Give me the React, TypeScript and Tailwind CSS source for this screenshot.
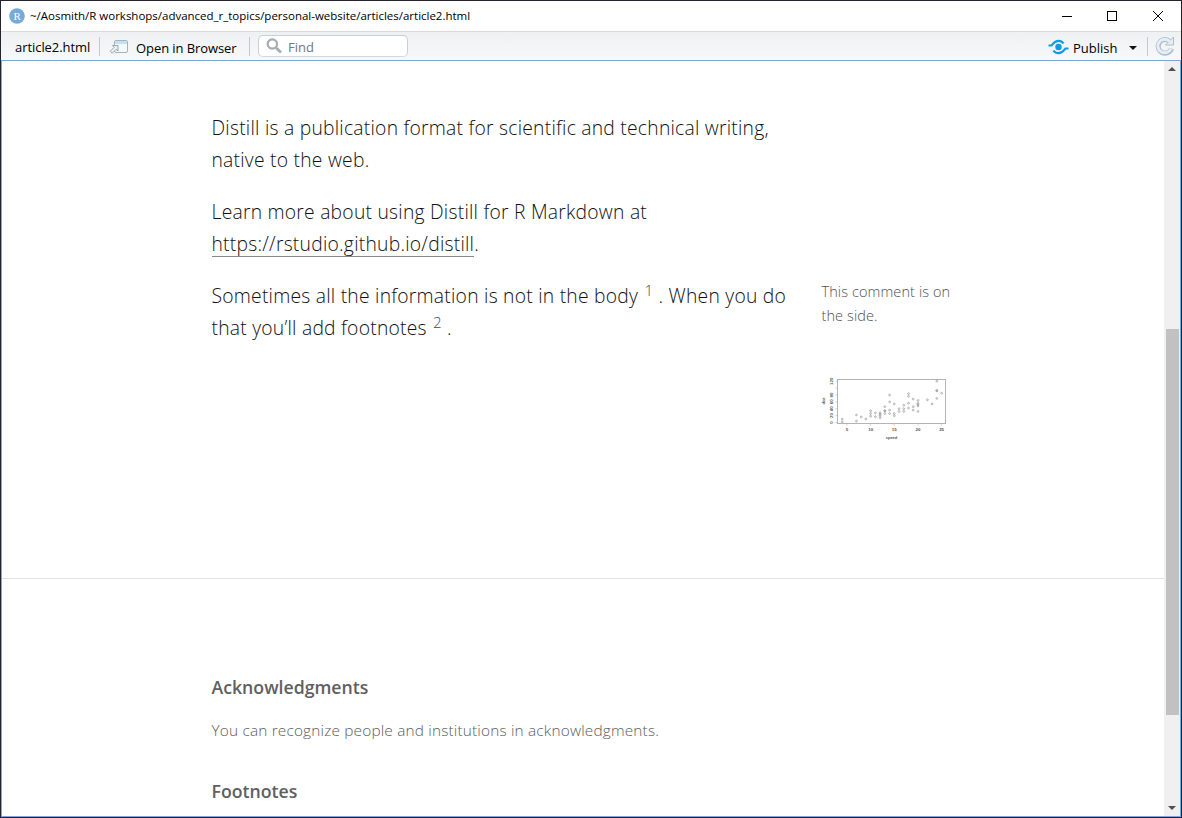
import React from "react";

const cars: [number, number][] = [
  [4, 2], [4, 10], [7, 4], [7, 22], [8, 16], [9, 10], [10, 18], [10, 26], [10, 34], [11, 17],
  [11, 28], [12, 14], [12, 20], [12, 24], [12, 28], [13, 26], [13, 34], [13, 34], [13, 46], [14, 26],
  [14, 36], [14, 60], [14, 80], [15, 20], [15, 26], [15, 54], [16, 32], [16, 40], [17, 32], [17, 40],
  [17, 50], [18, 42], [18, 56], [18, 76], [18, 84], [19, 36], [19, 46], [19, 68], [20, 32], [20, 48],
  [20, 52], [20, 56], [20, 64], [22, 66], [23, 54], [24, 70], [24, 92], [24, 93], [24, 120], [25, 85],
];

const px = (speed: number) => 32 + (speed - 5) * 4.73;
const py = (dist: number) => 52.5 - dist * 0.344;

function CarsPlot() {
  return (
    <svg width="140" height="75" viewBox="0 0 140 75" className="-ml-[7px] block">
      <rect x="22.5" y="9.5" width="108" height="44" fill="none" stroke="#b4b4b4" />
      {cars.map(([s, d], i) => (
        <circle key={i} cx={px(s)} cy={py(d)} r="0.9" fill="none" stroke="#888" strokeWidth="0.6" />
      ))}
      <g fill="#555" fontFamily="Liberation Sans, sans-serif" fontSize="4.4" fontWeight="bold" textAnchor="middle">
        {[5, 10, 15, 20, 25].map((v) => (
          <g key={v}>
            <path d={`M${px(v)} 53.5v2`} stroke="#aaa" strokeWidth="0.5" />
            <text x={px(v)} y="61">{v}</text>
          </g>
        ))}
        {[0, 20, 40, 60, 80, 100, 120].map((v) => (
          <g key={v}>
            <path d={`M20.5 ${py(v)}h2`} stroke="#aaa" strokeWidth="0.5" />
            {v !== 100 && (
              <text transform={`translate(18 ${py(v)}) rotate(-90)`}>{v}</text>
            )}
          </g>
        ))}
        <text x="76.500" y="69" fontSize="4">speed</text>
        <text transform="translate(10 31) rotate(-90)" fontSize="4">dist</text>
      </g>
    </svg>
  );
}

function TitleBar() {
  return (
    <div className="flex h-[31px] shrink-0 items-center border-b border-[#d9dadb] bg-white pl-2 text-black">
      <svg width="16" height="16" viewBox="0 0 16 16">
        <circle cx="8" cy="8" r="7.8" fill="#75aadb" />
        <text x="8.200" y="11.800" textAnchor="middle" fontFamily="Liberation Serif, serif" fontSize="11" fill="#fff">R</text>
      </svg>
      <span className="ml-[5px] whitespace-nowrap text-[11.5px] tracking-[-0.01px]">
        ~/Aosmith/R workshops/advanced_r_topics/personal-website/articles/article2.html
      </span>
      <svg className="ml-auto mr-[17px]" width="102" height="12" viewBox="0 0 102 12" fill="none" stroke="#000">
        <path d="M0 6.500h10" />
        <rect x="45.500" y="1.500" width="9" height="9" />
        <path d="M91 1l10 10M101 1L91 11" />
      </svg>
    </div>
  );
}

const Divider = () => <div className="h-[19px] w-px bg-[#c5c9cb]" />;

function Toolbar() {
  return (
    <div className="flex h-7 shrink-0 items-center bg-linear-to-b from-[#eef1f2] to-[#f7f8f9] text-[13px] text-black">
      <span className="ml-[14px] w-[75px] whitespace-nowrap pt-[3px] tracking-[-0.06px]">article2.html</span>
      <div className="ml-[9px]"><Divider /></div>
      <svg className="ml-[9px] mt-px" width="20" height="16" viewBox="0 0 20 16">
        <rect x="5.500" y="1.500" width="13" height="12" rx="1.500" fill="#f4f8fa" stroke="#a3b3be" />
        <path d="M6 2h12v3H6z" fill="#c4e0f4" />
        <path d="M3.500 6.500H9V12L7.200 10.300l-4 4-2-2 4-4z" fill="#edf1f3" stroke="#929ea6" strokeWidth="0.9" />
      </svg>
      <span className="ml-[7px] w-[102px] whitespace-nowrap pt-[5px] tracking-[-0.08px]">Open in Browser</span>
      <div className="ml-[11px]"><Divider /></div>
      <div className="ml-2 flex h-[22px] w-[150px] items-center rounded-[5px] border border-[#c9cfd2] border-b-[#d5d9dc] bg-white pl-[7px] text-[#73767f]">
        <svg width="17" height="17" viewBox="0 0 17 17" fill="none" stroke="#a5adb0">
          <circle cx="6.300" cy="6" r="4.700" strokeWidth="2.200" />
          <path d="M10 9.700l5 4.800" strokeWidth="2.800" />
        </svg>
        <span className="ml-[5px] pt-[3px]">Find</span>
      </div>
      <svg className="ml-auto mt-[2px]" width="21" height="16" viewBox="0 0 21 16" fill="none" stroke="#0c9be9">
        <circle cx="10.500" cy="8" r="3.200" fill="#0c9be9" stroke="none" />
        <path d="M.5 6.500H3.500C5 5 6.500 1.800 10.500 1.800c2.500 0 4 1.200 5 2.700M20.500 9.500h-3c-1.500 1.500-3 4.700-7 4.700-2.500 0-4-1.200-5-2.700" strokeWidth="2.200" />
      </svg>
      <span className="ml-1 w-[46px] pt-[5px]">Publish</span>
      <svg className="ml-[10px] mt-[3px]" width="8" height="4" viewBox="0 0 8 4"><path d="M0 0h8L4 4z" fill="#111" /></svg>
      <div className="ml-[10px]"><Divider /></div>
      <svg className="ml-[7px] mr-[6px]" width="20" height="20" viewBox="0 0 20 20" fill="none">
        <path d="M14.800 5.500A6.800 6.800 0 1 0 16.500 12.500" stroke="#aebdce" strokeWidth="5" />
        <path d="M18.500 1v8h-8z" fill="#e6edf4" stroke="#aebdce" />
        <path d="M14.800 5.500A6.800 6.800 0 1 0 16 12.500" stroke="#e6edf4" strokeWidth="3" />
      </svg>
    </div>
  );
}

function Article() {
  return (
    <main className="min-w-0 flex-1 overflow-hidden bg-white">
      <div className="flex h-[518px] border-b border-[#e3e3e3] pl-[209.5px] pt-[51px] text-[19.3px] font-light leading-8 tracking-[0.24px] text-[#111]">
        <div className="w-[610px] whitespace-nowrap">
          <p>Distill is a publication format for scientific and technical writing,<br />native to the web.</p>
          <p className="mt-5">Learn more about using Distill for R Markdown at<br />
            <a className="inline-block h-[29px] border-b border-[#888]">https://rstudio.github.io/distill</a>.</p>
          <p className="mt-5">Sometimes all the information is not in the body <sup className="-top-[7px] ml-px text-[15px] leading-none text-[#40505a]">1</sup> . When you do<br />
            that you’ll add footnotes <sup className="-top-[7px] ml-px text-[15px] leading-none text-[#255080]">2</sup> .</p>
        </div>
        <aside className="pt-[168px] text-[14.5px] leading-6 tracking-[0.1px] text-[#505050]">
          <p>This comment is on<br />the side.</p>
          <div className="mt-[42px] tracking-normal"><CarsPlot /></div>
        </aside>
      </div>
      <footer className="pl-[209.5px] pt-[92px] text-[15.4px] leading-6 text-[#5c5c5c]">
        <h3 className="text-[17.700px] font-semibold leading-8 text-[#606060]">Acknowledgments</h3>
        <p className="mt-4 font-light tracking-[0.17px]">You can recognize people and institutions in acknowledgments.</p>
        <h3 className="mt-8 text-[17.700px] font-semibold leading-8 text-[#606060]">Footnotes</h3>
      </footer>
    </main>
  );
}

function ScrollBar() {
  return (
    <div className="flex w-4 flex-col items-center bg-[#f0f0f0]">
      <svg className="mt-[6px]" width="8" height="4" viewBox="0 0 8 4"><path d="M0 4h8L4 0z" fill="#505050" /></svg>
      <div className="mt-[258px] h-[386px] w-[13px] bg-[#c1c1c1]" />
      <svg className="mb-[6px] mt-auto" width="8" height="4" viewBox="0 0 8 4"><path d="M0 0h8L4 4z" fill="#505050" /></svg>
    </div>
  );
}

export default function App() {
  return (
    <div className="flex h-[818px] w-[1182px] flex-col overflow-hidden border border-[#22252b] font-['Open_Sans',sans-serif]">
      <TitleBar />
      <Toolbar />
      <div className="flex min-h-0 flex-1 border border-[#7fa5da]">
        <Article />
        <ScrollBar />
      </div>
    </div>
  );
}
